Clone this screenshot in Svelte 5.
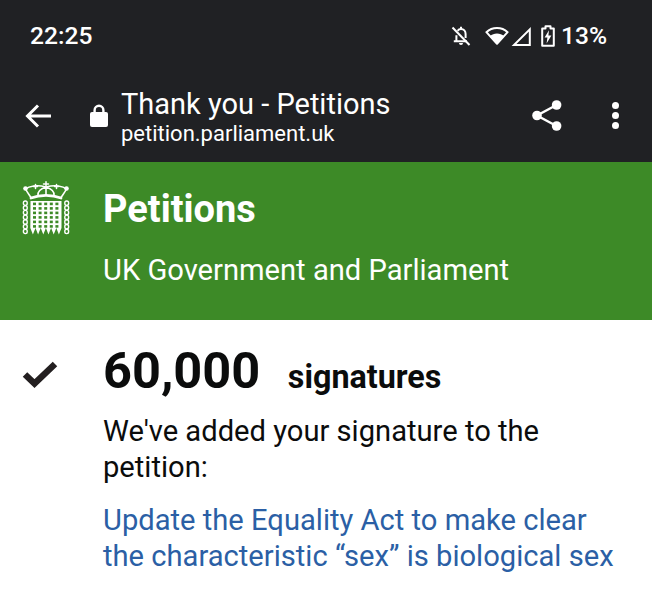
<script>
  const cols = [0, 1, 2, 3, 4];
  const rows = [0, 1, 2, 3, 4, 5];
  const links = [0, 1, 2, 3, 4, 5, 6];
</script>

<div class="page">
  <div class="status">
    <span class="time">22:25</span>
    <div class="status-icons">
      <svg class="bell" viewBox="0 0 20 20" width="20" height="20">
        <path d="M5.4 15V9.2M6.6 4.9C7.4 3.7 8.6 3 10 3c2.8 0 4.6 2.2 4.6 5v4M2.8 15.2H16M10 .8v2.4" fill="none" stroke="#fff" stroke-width="2"/>
        <path d="M8 17h4a2 2 0 0 1-4 0z" fill="#fff"/>
        <path d="M1.500 1.500l17 17.500" stroke="#fff" stroke-width="2"/>
      </svg>
      <svg class="wifi" viewBox="0 0 24 18" width="24" height="18">
        <path d="M12 16.800L1.400 5.200C4.200 2.600 8 1.100 12 1.100s7.800 1.500 10.600 4.100z" fill="none" stroke="#fff" stroke-width="2" stroke-linejoin="round"/>
        <path d="M12 16.800L5 9C6.800 7.400 9.300 6.400 12 6.400s5.200 1 7 2.600z" fill="#fff"/>
      </svg>
      <svg class="signal" viewBox="0 0 20 19" width="20" height="19">
        <path d="M18.800 2.400V18H3z" fill="none" stroke="#fff" stroke-width="2"/>
      </svg>
      <svg class="battery" viewBox="0 0 14 22" width="14" height="22">
        <path d="M4.500 1.200h5v2.200h3.300v17.400H1.200V3.400h3.300z" fill="none" stroke="#fff" stroke-width="2" stroke-linejoin="round"/>
        <path d="M8 5.200L3.600 12.600h2.800L5.600 18.400l4.800-8H7.400z" fill="#fff"/>
      </svg>
      <span class="pct">13%</span>
    </div>
  </div>

  <div class="toolbar">
    <svg class="back" viewBox="0 0 28 28" width="28" height="28">
      <path d="M27 14H4M14 3.500L3.500 14 14 24.500" fill="none" stroke="#fff" stroke-width="3"/>
    </svg>
    <svg class="lock" viewBox="0 0 18 23" width="18" height="23">
      <path d="M4.600 9V6.200a4.400 4.400 0 0 1 8.800 0V9" fill="none" stroke="#fff" stroke-width="2.400"/>
      <rect y="8" width="18" height="15" rx="2" fill="#fff"/>
    </svg>
    <div class="titles">
      <div class="title">Thank you - Petitions</div>
      <div class="url">petition.parliament.uk</div>
    </div>
    <svg class="share" viewBox="0 0 30 31" width="30" height="31">
      <path d="M24.500 5L5 15.500l19.500 10.500" fill="none" stroke="#fff" stroke-width="2.400"/>
      <circle cx="24.600" cy="5" r="4.800" fill="#fff"/>
      <circle cx="5" cy="15.500" r="4.800" fill="#fff"/>
      <circle cx="24.600" cy="26" r="4.800" fill="#fff"/>
    </svg>
    <div class="more"><i></i><i></i><i></i></div>
  </div>

  <div class="banner">
    <svg class="logo" viewBox="0 0 48 60" width="48" height="60">
      <g fill="none" stroke="#fff" stroke-linecap="round">
        <path d="M24 6C15 3.500 7 5 3.500 8 5 11 7 13.500 9 16.500M24 6c9-2.500 17-1 20.500 2-1.500 3-3.500 5.500-5.500 8.500" stroke-width="1.600"/>
        <path d="M24 6C18 8 15.500 11 16 14.500M24 6c6 2 8.500 5 8 8.500M24 6v8" stroke-width="1.600"/>
        <path d="M9 17c9-3.500 21-3.500 30 0" stroke-width="2.800"/>
        <path d="M24 .8v5M21.500 3h5M13.500 3.500v4M11.500 5.500h4M34.500 3.500v4M32.500 5.500h4" stroke-width="1.500"/>
      </g>
      <g fill="#fff">
        <circle cx="3.500" cy="7.500" r="2.300"/>
        <circle cx="44.500" cy="7.500" r="2.300"/>
        <path d="M8.500 20h31v27l-2.600 6.500-2.600-6.500-2.600 6.500-2.600-6.500-2.600 6.500-2.600-6.500-2.600 6.500-2.600-6.500-2.600 6.500-2.600-6.500-2.600 6.500-2.600-6.500z"/>
      </g>
      <g fill="#3d8a27">
        {#each rows as r}
          {#each cols as c}
            <rect x={11 + c * 5.600} y={21.600 + r * 4.500} width="3" height="2.600" />
          {/each}
        {/each}
      </g>
      <g fill="none" stroke="#fff" stroke-width="1.400">
        {#each links as i}
          <rect x="1.400" y={20 + i * 4.700} width="3.800" height="4.400" rx="1.800" />
          <rect x="42.800" y={20 + i * 4.700} width="3.800" height="4.400" rx="1.800" />
        {/each}
      </g>
    </svg>
    <div class="brand">
      <div class="brand-name">Petitions</div>
      <div class="brand-sub">UK Government and Parliament</div>
    </div>
  </div>

  <div class="content">
    <svg class="check" viewBox="0 0 36 28" width="36" height="28">
      <path d="M3 14.500l9.500 9L33 4" fill="none" stroke="#231f20" stroke-width="6.500"/>
    </svg>
    <div class="body">
      <div class="count"><span class="num">60,000</span><span class="sig">signatures</span></div>
      <p class="added">We've added your signature to the petition:</p>
      <a class="link" href="#top">Update the Equality Act to make clear the characteristic “sex” is biological sex</a>
    </div>
  </div>
</div>

<style>
  :global(body) { margin: 0; background: #fff; }
  .page { width: 652px; height: 600px; overflow: hidden; font-family: Roboto, "Liberation Sans", sans-serif; }
  .status { height: 72px; box-sizing: border-box; background: #202124; color: #fff; display: flex; align-items: center; justify-content: space-between; padding: 0 45px 2px 30px; }
  .time { font-size: 24.600px; font-weight: 500; }
  .status-icons { display: flex; align-items: center; padding-top: 2px; }
  .bell { margin-right: 14px; }
  .wifi { margin-right: 2px; }
  .signal { margin-right: 10px; }
  .battery { margin-right: 6px; }
  .pct { font-size: 24.600px; font-weight: 500; margin-top: -2px; }
  .toolbar { height: 90px; background: #202124; color: #fff; display: flex; align-items: center; padding: 0 33px 3px 24px; box-sizing: border-box; }
  .back { margin-right: 38px; }
  .lock { margin-right: 13px; }
  .titles { flex: 1; padding-top: 2px; }
  .title { font-size: 29px; line-height: 34px; }
  .url { font-size: 22px; line-height: 26px; }
  .share { margin-right: 50px; }
  .more { display: flex; flex-direction: column; gap: 2.700px; }
  .more i { width: 7px; height: 7px; background: #fff; border-radius: 50%; display: block; }
  .banner { height: 158px; background: #3d8a27; color: #fff; display: flex; padding: 19px 0 0 22px; box-sizing: border-box; }
  .logo { margin-right: 33px; flex: none; }
  .brand-name { font-size: 38px; font-weight: 700; line-height: 56px; }
  .brand-sub { font-size: 29.150px; line-height: 40px; margin-top: 13px; }
  .content { display: flex; padding: 22px 34px 0 22px; }
  .check { margin: 18px 45px 0 0; flex: none; }
  .body { color: #0b0c0c; flex: 1; }
  .count { display: flex; align-items: baseline; line-height: 58px; }
  .num { font-size: 50.500px; font-weight: 700; margin-right: 27.500px; }
  .sig { font-size: 32.300px; font-weight: 700; }
  .added { margin: 7px 0 0; font-size: 29.150px; line-height: 36px; }
  .link { display: block; margin-top: 17px; font-size: 29.150px; line-height: 36px; color: #2b5fa5; text-decoration: none; }
</style>
